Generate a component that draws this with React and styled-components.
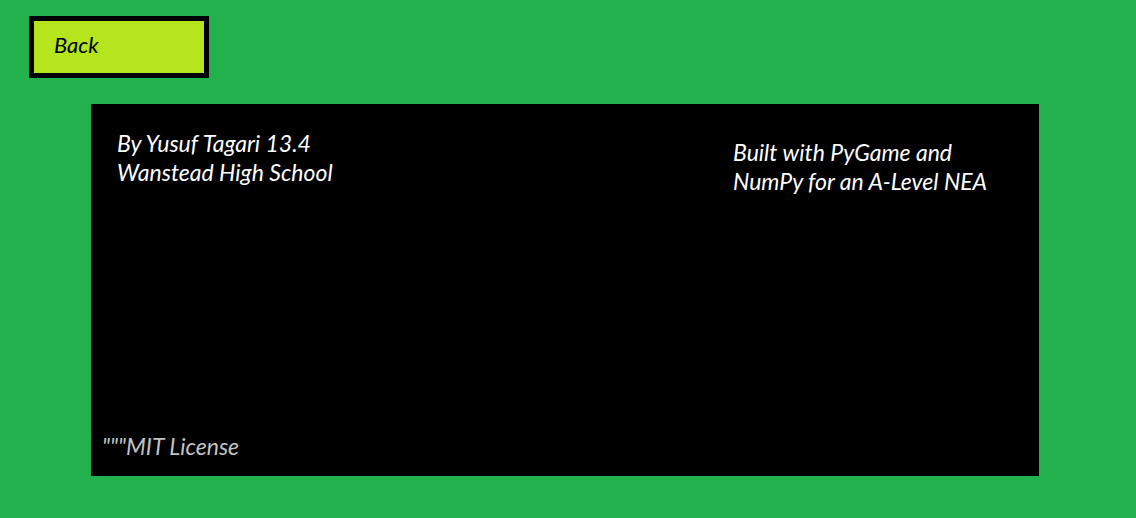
import React from 'react';
import styled, { createGlobalStyle } from 'styled-components';

const GlobalStyle = createGlobalStyle`
  html, body {
    margin: 0;
    padding: 0;
    background: #22b14c;
  }
  body {
    font-family: Lato, "Open Sans", sans-serif;
    font-style: italic;
  }
`;

const Page = styled.div`
  width: 1136px;
  height: 518px;
  padding: 16px 0 0 29px;
  box-sizing: border-box;
  background: #22b14c;
`;

const BackButton = styled.button`
  width: 180px;
  height: 62px;
  box-sizing: border-box;
  border: 5px solid #000;
  background: #b5e61d;
  display: flex;
  align-items: center;
  padding: 0 0 6px 20px;
  font-family: inherit;
  font-style: italic;
  font-size: 22px;
  color: #000;
  cursor: pointer;
`;

const Panel = styled.div`
  margin: 26px 0 0 62px;
  width: 948px;
  height: 372px;
  background: #000;
  display: flex;
  flex-direction: column;
  justify-content: space-between;
  box-sizing: border-box;
  padding: 0 0 17px 0;
`;

const Top = styled.div`
  display: flex;
`;

const Column = styled.div`
  width: ${p => p.$width}px;
  padding: ${p => p.$top}px 0 0 ${p => p.$left}px;
  box-sizing: border-box;
  color: #fff;
  font-size: 23px;
  line-height: 29px;
`;

const Footer = styled.div`
  padding-left: 11px;
  color: #c3c3c3;
  font-size: 23px;
  line-height: 26px;
`;

export default function App() {
  return (
    <Page>
      <GlobalStyle />
      <BackButton>Back</BackButton>
      <Panel>
        <Top>
          <Column $width={642} $top={25} $left={26}>
            By Yusuf Tagari 13.4<br />
            Wanstead High School
          </Column>
          <Column $width={306} $top={34} $left={0}>
            Built with PyGame and<br />
            NumPy for an A-Level NEA
          </Column>
        </Top>
        <Footer>"""MIT License</Footer>
      </Panel>
    </Page>
  );
}
